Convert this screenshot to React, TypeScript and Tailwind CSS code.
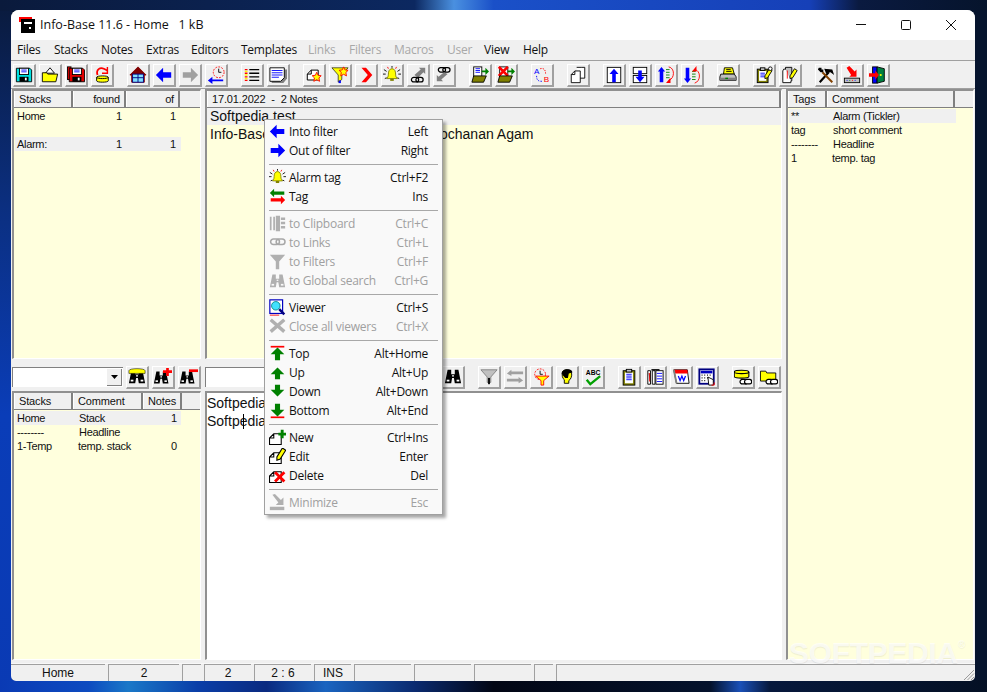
import React from "react";

const K = "#000";
const Y = "#ffff00";
const R = "#ff0000";
const B = "#0000ff";
const G = "#008000";
const S = "#808080";
const L = "#c0c0c0";
const W = "#ffffff";

const Chain = ({ x = 0, y = 0, c = K, f = "none" }: { x?: number; y?: number; c?: string; f?: string }) => (
  <g transform={`translate(${x} ${y})`} fill={f} stroke={c} strokeWidth="1.4">
    <rect x="0.7" y="0.7" width="8" height="5" rx="2.5" />
    <rect x="5.7" y="0.7" width="8" height="5" rx="2.5" />
  </g>
);
const Binoc = ({ c = K, e = W }: { c?: string; e?: string }) => (
  <g>
    <path d="M4 2h4v5h4V2h4l3 15h-7l-1-6h-2l-1 6H1z" fill={c} />
    <rect x="3" y="13" width="3" height="2" fill={e} />
    <rect x="14" y="13" width="3" height="2" fill={e} />
    <rect x="9" y="8" width="2" height="1.5" fill={e} />
  </g>
);
const Disk = ({ x = 0, y = 0, c = "#ffff00" }: { x?: number; y?: number; c?: string }) => (
  <g transform={`translate(${x} ${y})`}>
    <path d="M1 3.5C1 1.5 14 1.5 14 3.5v4C14 9.5 1 9.5 1 7.5z" fill={c} stroke={K} />
    <path d="M1 3.5C1 5.5 14 5.5 14 3.5" fill="none" stroke={K} />
  </g>
);
const Pencil = ({ x = 0, y = 0 }: { x?: number; y?: number }) => (
  <g transform={`translate(${x} ${y})`}>
    <path d="M6 0l3 2-5 8-3 1 0-3z" fill={Y} stroke={K} />
  </g>
);
const Floppy = ({ c, c2 = K }: { c: string; c2?: string }) => (
  <g>
    <path d="M1.5 2.5h15l2 2v13h-17z" fill={c} stroke={K} />
    <rect x="5" y="2.5" width="10" height="7" fill={W} stroke={K} />
    <path d="M7 4.5h6M7 6.5h6" stroke={B} />
    <rect x="5" y="12" width="10" height="5.5" fill={c2} />
    <rect x="11" y="13" width="2" height="3" fill={W} />
  </g>
);
const Page = ({ x = 0, y = 0, c = W }: { x?: number; y?: number; c?: string }) => (
  <path transform={`translate(${x} ${y})`} d="M4.5.5h7v10h-11V4.5z M4.5.5v4h-4" fill={c} stroke={K} />
);
const Bell = () => (
  <g>
    <path d="M10 3c-3 0-4 3-4 6 0 3-1 4-2 5h12c-1-1-2-2-2-5 0-3-1-6-4-6z" fill={Y} stroke="#808000" />
    <rect x="8" y="14" width="4" height="2.5" fill="#808000" />
    <path d="M1 4l3 2M19 4l-3 2M0 9h3M17 9h3M2 14l2-1M18 14l-2-1M10 0v2" stroke={K} />
    <path d="M5 1l1 2M15 1l-1 2" stroke={R} />
  </g>
);
const Clock = ({ x = 0, y = 0 }: { x?: number; y?: number }) => (
  <g transform={`translate(${x} ${y})`}>
    <circle cx="7" cy="7" r="6" fill="none" stroke={R} strokeDasharray="2 1.4" />
    <path d="M7 3v4h3" fill="none" stroke={K} />
  </g>
);
const ArrowLeft = ({ c }: { c: string }) => <path d="M1 10l8-8v5h9v6H9v5z" fill={c} />;
const ArrowRight = ({ c }: { c: string }) => <path d="M19 10l-8-8v5H2v6h9v5z" fill={c} />;
const ArrowUp = ({ c = G }: { c?: string }) => <path d="M10 4l8 8h-5v6H7v-6H2z" fill={c} />;
const ArrowDown = ({ c = G }: { c?: string }) => <path d="M10 16l8-8h-5V2H7v6H2z" fill={c} />;
const Funnel = ({ c }: { c: string }) => <path d="M1 2h18l-7 8v5l-4 3v-8z" fill={c} stroke={K} strokeWidth="0.7" />;
const XMark = ({ x = 0, y = 0, s = 1 }: { x?: number; y?: number; s?: number }) => (
  <path transform={`translate(${x} ${y}) scale(${s})`} d="M1 1l10 10M11 1L1 11" stroke={R} strokeWidth="3" />
);
const Star = ({ x = 0, y = 0 }: { x?: number; y?: number }) => (
  <path transform={`translate(${x} ${y})`} d="M5 0l1.5 3.3L10 3.8 7.5 6.2 8.2 10 5 8.2 1.8 10l.7-3.8L0 3.8l3.5-.5z" fill={Y} stroke={R} />
);

const icons: Record<string, React.ReactNode> = {
  save: <Floppy c="#00e0e0" />,
  open: (
    <g>
      <path d="M5 8l5-6 5 6z" fill={W} stroke={K} />
      <path d="M1.5 7.5h5l1 1.5h11l-2 8.5h-15z" fill={Y} stroke={K} />
    </g>
  ),
  saveas: (
    <g>
      <rect x="0.5" y="1" width="4" height="14" fill={R} stroke={K} />
      <g transform="translate(1 0)"><Floppy c="#e00000" /></g>
    </g>
  ),
  diskred: (
    <g>
      <Disk x="3" y="9" />
      <path d="M5 10C3 4 8 1 12 3l4 2" fill="none" stroke={R} strokeWidth="2" />
      <path d="M16 1v7h-6" fill="none" stroke={R} strokeWidth="1.6" />
    </g>
  ),
  home: (
    <g>
      <path d="M10 1L1 10h2v8h14v-8h2z" fill="#800000" stroke="#800000" />
      <rect x="4" y="9" width="12" height="9" fill="#80e0ff" stroke="#000080" />
      <path d="M10 9v9M4 13h12" stroke="#000080" />
    </g>
  ),
  left: <ArrowLeft c={B} />,
  right: <ArrowRight c={B} />,
  grayright: <ArrowRight c="#a0a0a0" />,
  clockleft: (
    <g>
      <Clock x="6" y="0" />
      <path d="M1 16l5-4v3h12v2H6v3z" fill={B} />
    </g>
  ),
  list: (
    <g>
      <path d="M2 4h3M2 8h3M2 12h3M2 16h3" stroke={R} strokeWidth="1.5" />
      <path d="M2 6h3M2 10h3M2 14h3" stroke={Y} strokeWidth="1.5" />
      <path d="M7 4h11M7 8h11M7 12h11M7 16h11" stroke={K} strokeWidth="1.5" />
    </g>
  ),
  note: (
    <g>
      <path d="M3 4h17v10l-4 5H3z" fill={S} />
      <path d="M1 2h16v11l-4 4H1z" fill={W} stroke={K} />
      <path d="M3 5h12M3 7.5h12M3 10h12M3 12.5h8" stroke={B} />
    </g>
  ),
  pagestar: (
    <g>
      <g transform="translate(2 4) scale(1.1)"><Page /></g>
      <Star x="8" y="7" />
    </g>
  ),
  funnelstar: (
    <g>
      <Funnel c={Y} />
      <rect x="8.5" y="16" width="2.5" height="3" fill={B} />
      <Star x="9" y="1" />
    </g>
  ),
  chev: <path d="M5 2h5l7 8-7 8H5l7-8z" fill={R} />,
  bell: <Bell />,
  graychain: (
    <g>
      <path d="M6 10l7-6-2-2h7v7l-2-2-6 6z" fill={S} />
      <Chain x="2" y="12" />
    </g>
  ),
  chaingray: (
    <g>
      <Chain x="3" y="1" />
      <path d="M14 9l-7 6 2 2H2v-7l2 2 6-5z" fill={S} />
    </g>
  ),
  docin: (
    <g>
      <rect x="3" y="1" width="9" height="11" fill={W} stroke={K} />
      <path d="M5 3h5M5 5h5M5 7h5" stroke={B} />
      <path d="M12 5h4V2l4 4-4 4V7h-4z" fill={G} />
      <path d="M1 18l2-7h14l-3 7z" fill="#808000" stroke={K} />
    </g>
  ),
  docx: (
    <g>
      <rect x="3" y="1" width="9" height="11" fill={W} stroke={K} />
      <XMark x="1" y="0" />
      <path d="M12 5h4V2l4 4-4 4V7h-4z" fill={G} />
      <path d="M1 18l2-7h14l-3 7z" fill="#808000" stroke={K} />
    </g>
  ),
  ab: (
    <g>
      <text x="1" y="9" fontSize="9" fontFamily="Liberation Sans" fill={B}>A</text>
      <text x="12" y="18" fontSize="9" fontFamily="Liberation Sans" fill={R}>B</text>
      <path d="M4 11c0 5 2 6 6 6" fill="none" stroke={B} strokeDasharray="1.4 1.4" />
      <path d="M8 3c4-1 6 1 6 6" fill="none" stroke={R} strokeDasharray="1.4 1.4" />
    </g>
  ),
  pages: (
    <g>
      <path d="M8.5 1.5h5l4 0v12h-6" fill={W} stroke={K} />
      <path d="M6.5 5.5h6v13h-10V9.5z M6.5 5.5v4h-4" fill={W} stroke={K} />
    </g>
  ),
  boxup: (
    <g>
      <rect x="2.5" y="1.5" width="15" height="17" fill={W} stroke={K} />
      <path d="M10 3l5 6h-3v9H8V9H5z" fill={B} />
    </g>
  ),
  boxdown: (
    <g>
      <rect x="2.5" y="1.5" width="15" height="7" fill={W} stroke={K} />
      <rect x="2.5" y="10.5" width="15" height="8" fill={W} stroke={K} />
      <path d="M10 18l5-6h-3V5H8v7H5z" fill={B} />
    </g>
  ),
  listup: (
    <g>
      <path d="M5 1l4 5H7v12H3V6H1z" fill={B} />
      <path d="M10 4h4M10 7h4M10 10h4M10 13h4" stroke={G} />
      <path d="M13 1c7 1 7 13 0 15" fill="none" stroke={R} />
      <path d="M15 13v6h-5z" fill={R} />
    </g>
  ),
  listdown: (
    <g>
      <path d="M5 19l4-5H7V2H3v12H1z" fill={B} />
      <path d="M10 6h4M10 9h4M10 12h4M10 15h4" stroke={G} />
      <path d="M13 4c7 1 7 13 0 15" fill="none" stroke={R} />
      <path d="M15 0v6h-5z" fill={R} />
    </g>
  ),
  printer: (
    <g>
      <path d="M6 2h9l2 7H5z" fill={Y} stroke={K} />
      <path d="M8 4h5M8 6h6" stroke={K} />
      <path d="M2 9h15l2 3v4H1v-4z" fill={L} stroke={K} />
      <rect x="1" y="13" width="18" height="3" fill={S} />
      <rect x="7" y="13" width="3" height="1.5" fill={G} />
    </g>
  ),
  clippen: (
    <g>
      <rect x="2.5" y="3.5" width="12" height="15" fill="#808000" stroke={K} />
      <rect x="4.5" y="5.5" width="8" height="11" fill={W} />
      <rect x="6" y="2" width="5" height="3" fill={L} stroke={K} />
      <path d="M6 8h5M6 10h5M6 12h5" stroke={B} />
      <Pencil x="10" y="3" />
      <circle cx="17" cy="3" r="2" fill={W} stroke={K} />
    </g>
  ),
  docspen: (
    <g>
      <path d="M5 1.5h7v15H5z" fill={L} stroke={K} />
      <path d="M5 3.5h-2l-1 2v13h9v-2" fill={W} stroke={K} />
      <path d="M7 5v9" stroke={R} />
      <Pencil x="9" y="3" />
    </g>
  ),
  tools: (
    <g>
      <path d="M3 18L13 7" stroke="#000" strokeWidth="2.4" />
      <path d="M8 3l9 1 2 6-4-3-5 1z" fill={K} />
      <path d="M17 18L6 7" stroke="#804000" strokeWidth="2.2" />
      <path d="M2 2l3 0 0 2 2 0 0 3-3 0-3-3z" fill={K} />
    </g>
  ),
  trayin: (
    <g>
      <path d="M4 2l3-2 6 6 2-2v8H7l2-2z" fill={R} />
      <rect x="1.5" y="13.5" width="17" height="5" fill={L} stroke={K} />
      <path d="M4 16h1" stroke={B} /><path d="M7 16h1" stroke={G} /><path d="M10 16h1" stroke={R} /><path d="M13 16h1" stroke={B} />
    </g>
  ),
  door: (
    <g>
      <rect x="4" y="1" width="5" height="18" fill={B} stroke={K} />
      <path d="M9 1l8 2v14l-8 2z" fill="#008040" stroke={K} />
      <rect x="12" y="9" width="2" height="2" fill={Y} />
      <path d="M0 8h7V5l4 5-4 5v-3H0z" fill={R} />
    </g>
  ),
  binoc: <Binoc />,
  binocy: (
    <g>
      <Binoc />
      <path d="M1 3C1 0 19 0 19 3v3H1z" fill={Y} stroke={K} strokeWidth="0.6" />
    </g>
  ),
  binocplus: (
    <g>
      <g transform="translate(-1 2) scale(.9)"><Binoc /></g>
      <path d="M10 4h10M15 0v9" stroke={R} strokeWidth="3" />
    </g>
  ),
  binocminus: (
    <g>
      <g transform="translate(-1 2) scale(.9)"><Binoc /></g>
      <path d="M10 3h10" stroke={R} strokeWidth="3" />
    </g>
  ),
  funnel: (
    <g>
      <path d="M1 2h18l-7 8v6H8v-6z" fill={L} stroke={S} />
      <rect x="9" y="11" width="2" height="7" fill={K} />
    </g>
  ),
  swapgray: (
    <g>
      <path d="M1 6l5-4v2h13v3H6v2z" fill="#a0a0a0" />
      <path d="M19 14l-5-4v2H1v3h13v2z" fill="#a0a0a0" />
    </g>
  ),
  clockfunnel: (
    <g>
      <Clock x="2" y="0" />
      <path d="M4 9h15l-6 5v5h-3v-5z" fill={Y} stroke={R} />
    </g>
  ),
  head: (
    <g>
      <path d="M5 4c2-3 9-3 10 1 1 4-1 8-3 9v3H7v-4C5 12 4 8 5 4z" fill={Y} stroke={K} />
      <path d="M4 6c1-6 12-6 12-1l-4 1-1 5H8L6 9z" fill={K} />
    </g>
  ),
  abc: (
    <g>
      <text x="2" y="8" fontSize="7.5" fontFamily="Liberation Sans" fontWeight="700" fill={K}>ABC</text>
      <path d="M3 13l4 5L18 9" fill="none" stroke="#00a000" strokeWidth="2.6" />
    </g>
  ),
  clipboard: (
    <g>
      <rect x="3.5" y="3" width="13" height="16" fill="#808000" stroke={K} />
      <rect x="5.5" y="5" width="9" height="12" fill={W} />
      <rect x="7" y="1.5" width="6" height="3" fill={L} stroke={K} />
      <path d="M7 7h6M7 9h6M7 11h6M7 13h6" stroke={B} />
    </g>
  ),
  files: (
    <g>
      <path d="M2 3h3v15H2zM7 3h3v15H7z" fill={W} stroke={K} />
      <path d="M3 6h1v9" stroke={R} />
      <rect x="11" y="3" width="8" height="15" fill={W} stroke={K} />
      <path d="M12 6h6M12 9h6M12 12h6M12 15h6" stroke={B} />
      <path d="M6 2h9" stroke={K} strokeWidth="1.5" />
    </g>
  ),
  calendar: (
    <g>
      <path d="M2 2h15l2 15H5z" fill={W} stroke={K} />
      <path d="M2 2h15l.6 4H2.6z" fill={R} />
      <path d="M7 9l2 5 2-5 2 5 2-5" fill="none" stroke={B} strokeWidth="1.4" />
      <path d="M2 2l3 15" stroke={S} strokeWidth="2" />
    </g>
  ),
  calc: (
    <g>
      <rect x="1.5" y="1.5" width="16" height="16" fill={W} stroke="#000080" strokeWidth="2" />
      <rect x="3" y="3" width="13" height="3" fill="#0000c0" />
      <path d="M4 8h1M7 8h1M10 8h1M13 8h1M4 11h1M7 11h1M10 11h1M4 14h1M7 14h1" stroke={K} strokeWidth="1.4" />
      <path d="M11 10l6 3v6h-5z" fill={W} stroke={K} />
      <path d="M18 16v3h-3" stroke={R} fill="none" />
    </g>
  ),
  diskchain: (
    <g>
      <g transform="translate(-1 0) scale(1.25)"><Disk /></g>
      <Chain x="6" y="12" f="#ffffff" />
    </g>
  ),
  folderchain: (
    <g>
      <path d="M0.5 3.5h6l1 2h10v9h-17z" fill={Y} stroke={K} />
      <Chain x="6" y="12" f="#ffffff" />
    </g>
  ),
  tag: (
    <g>
      <path d="M1 6l5-5v3h12v4H6v3z" fill={G} />
      <path d="M19 14l-5-5v3H2v4h12v3z" fill={R} />
    </g>
  ),
  gclip: (
    <g fill="#b0b0b0">
      <path d="M1 2h2v16H1zM5 2h2v16H5z" />
      <path d="M8 1h5v18H8zM14 3h5v3h-5zM14 8h5v3h-5zM14 13h5v3h-5z" />
    </g>
  ),
  gchain: <g transform="translate(1 5) scale(1.3)"><Chain c="#a8a8a8" /></g>,
  gfunnel: <path d="M1 2h18l-7 8v9H8v-9z" fill="#b0b0b0" />,
  gbinoc: <g transform="translate(0 1)"><Binoc c="#b0b0b0" e="#f9f9f9" /></g>,
  viewer: (
    <g>
      <rect x="1" y="1" width="15" height="16" fill={W} stroke="#0000c0" strokeWidth="1.4" />
      <circle cx="8" cy="8" r="5" fill="#40e0ff" stroke="#008080" />
      <path d="M12 12l6 6" stroke="#000080" strokeWidth="3" />
      <path d="M1 19h11" stroke={R} />
    </g>
  ),
  gx: <path d="M2 2l16 14M18 2L2 16" stroke="#b0b0b0" strokeWidth="4" />,
  top: (
    <g>
      <path d="M2 2h16" stroke={R} strokeWidth="2" />
      <path d="M10 3l8 8h-5v7H7v-7H2z" fill={G} />
    </g>
  ),
  up: <ArrowUp />,
  down: <ArrowDown />,
  bottom: (
    <g>
      <path d="M2 18h16" stroke={R} strokeWidth="2" />
      <path d="M10 17L2 9h5V2h6v7h5z" fill={G} />
    </g>
  ),
  newp: (
    <g>
      <g transform="translate(0 5) scale(1.25)"><Page /></g>
      <path d="M11 6h9M15.5 1v10" stroke={G} strokeWidth="3.4" />
    </g>
  ),
  editp: (
    <g>
      <g transform="translate(0 5) scale(1.25)"><Page /></g>
      <g transform="translate(8 0) scale(1.3)"><Pencil /></g>
    </g>
  ),
  delp: (
    <g>
      <g transform="translate(0 5) scale(1.25)"><Page /></g>
      <XMark x="6" y="5" s={1.1} />
    </g>
  ),
  gmin: (
    <g>
      <path d="M4 1l3-1 7 7 3-3v9H8l3-3z" fill="#b0b0b0" />
      <rect x="1" y="15" width="17" height="4" fill="#b0b0b0" />
    </g>
  ),
};

const Icon = ({ n, s = 20 }: { n: string; s?: number }) => (
  <svg width={s} height={s} viewBox="0 0 20 20" className="block shrink-0">
    {icons[n]}
  </svg>
);

const TBtn = ({ n }: { n: string }) => (
  <div className="flex h-[23px] w-[23px] items-center justify-center border-t border-l border-r-2 border-b-2 border-t-white border-l-white border-r-[#a0a0a0] border-b-[#a0a0a0] bg-[#f0f0f0]">
    <Icon n={n} s={18} />
  </div>
);

const Group = ({ items }: { items: string[] }) => (
  <div className="flex gap-[3px]">
    {items.map((n, i) => (
      <TBtn key={i} n={n} />
    ))}
  </div>
);

const menuBar: [string, string, boolean][] = [
  ["Files", "w-[37px]", false],
  ["Stacks", "w-[47px]", false],
  ["Notes", "w-[45px]", false],
  ["Extras", "w-[45px]", false],
  ["Editors", "w-[50px]", false],
  ["Templates", "w-[67px]", false],
  ["Links", "w-[41px]", true],
  ["Filters", "w-[45px]", true],
  ["Macros", "w-[53px]", true],
  ["User", "w-[37px]", true],
  ["View", "w-[39px]", false],
  ["Help", "w-[40px]", false],
];

const HeaderCell = ({ w, children, right }: { w: string; children?: React.ReactNode; right?: boolean }) => (
  <div className={`${w} flex h-full shrink-0 items-center border-r-2 border-r-[#808080] border-l border-l-white px-[4px] ${right ? "justify-end" : ""}`}>
    {children}
  </div>
);

const Header = ({ children }: { children: React.ReactNode }) => (
  <div className="flex h-[17px] shrink-0 border-b border-b-[#808080] bg-[#f0f0f0] text-[11px] tracking-[-0.15px] text-[#111]">{children}</div>
);

const Panel = ({ className, children }: { className: string; children: React.ReactNode }) => (
  <div className={`${className} flex flex-col overflow-hidden border-t-2 border-l-2 border-t-[#909090] border-l-[#909090] border-r border-b border-r-white border-b-white`}>
    {children}
  </div>
);

const menu: (null | [string, string, string, boolean?])[] = [
  ["left", "Into filter", "Left"],
  ["right", "Out of filter", "Right"],
  null,
  ["bell", "Alarm tag", "Ctrl+F2"],
  ["tag", "Tag", "Ins"],
  null,
  ["gclip", "to Clipboard", "Ctrl+C", true],
  ["gchain", "to Links", "Ctrl+L", true],
  ["gfunnel", "to Filters", "Ctrl+F", true],
  ["gbinoc", "to Global search", "Ctrl+G", true],
  null,
  ["viewer", "Viewer", "Ctrl+S"],
  ["gx", "Close all viewers", "Ctrl+X", true],
  null,
  ["top", "Top", "Alt+Home"],
  ["up", "Up", "Alt+Up"],
  ["down", "Down", "Alt+Down"],
  ["bottom", "Bottom", "Alt+End"],
  null,
  ["newp", "New", "Ctrl+Ins"],
  ["editp", "Edit", "Enter"],
  ["delp", "Delete", "Del"],
  null,
  ["gmin", "Minimize", "Esc", true],
];

const uiFont = "font-['Open_Sans','Noto_Sans',sans-serif]";

const PopupMenu = () => (
  <div className={`absolute top-[119px] left-[264px] z-10 w-[179px] border border-[#a0a0a0] bg-[#f9f9f9] px-[2px] py-[2px] text-[12px] tracking-[-0.25px] shadow-[3px_3px_3px_rgba(0,0,0,0.35)] ${uiFont}`}>
    {menu.map((m, i) =>
      m === null ? (
        <div key={i} className="flex h-[8px] items-center px-[2px]">
          <div className="h-px w-full bg-[#a8a8a8]" />
        </div>
      ) : (
        <div key={i} className={`flex h-[19px] items-center pr-[12px] pl-[2px] ${m[3] ? "text-[#a0a0a0]" : "text-[#111]"}`}>
          <Icon n={m[0]} s={17} />
          <span className="ml-[3px] grow">{m[1]}</span>
          <span>{m[2]}</span>
        </div>
      ),
    )}
  </div>
);

const Wallpaper = () => (
  <svg className="absolute inset-0" width="987" height="692" viewBox="0 0 987 692">
    <defs>
      <linearGradient id="lft" x1="0" y1="0" x2="0" y2="1">
        <stop offset="0" stopColor="#0a1a3c" />
        <stop offset="0.3" stopColor="#0b2f80" />
        <stop offset="0.6" stopColor="#0a3db8" />
        <stop offset="1" stopColor="#0a3ab4" />
      </linearGradient>
      <linearGradient id="bot" x1="0" y1="0" x2="1" y2="0">
        <stop offset="0" stopColor="#0a3ab4" />
        <stop offset="0.09" stopColor="#0d4bc0" />
        <stop offset="0.13" stopColor="#1a78c8" />
        <stop offset="0.2" stopColor="#0a3ea8" />
        <stop offset="0.27" stopColor="#0a2a80" />
        <stop offset="0.33" stopColor="#1a64c0" />
        <stop offset="0.42" stopColor="#0a2a70" />
        <stop offset="0.5" stopColor="#020614" />
        <stop offset="0.72" stopColor="#04122c" />
        <stop offset="0.75" stopColor="#1a50b8" />
        <stop offset="0.78" stopColor="#06183c" />
        <stop offset="1" stopColor="#041024" />
      </linearGradient>
      <linearGradient id="tp" x1="0" y1="0" x2="1" y2="0">
        <stop offset="0" stopColor="#0a1a3c" />
        <stop offset="0.42" stopColor="#0c2860" />
        <stop offset="0.46" stopColor="#4a90e0" />
        <stop offset="0.5" stopColor="#1a50c8" />
        <stop offset="0.82" stopColor="#1640b8" />
        <stop offset="0.87" stopColor="#0a1a40" />
        <stop offset="1" stopColor="#06142c" />
      </linearGradient>
    </defs>
    <rect width="987" height="692" fill="#06142e" />
    <rect width="12" height="692" fill="url(#lft)" />
    <rect width="987" height="11" fill="url(#tp)" />
    <rect y="680" width="987" height="12" fill="url(#bot)" />
  </svg>
);

export default function App() {
  return (
    <div className="relative h-[692px] w-[987px] overflow-hidden font-['Liberation_Sans',Arial,sans-serif]">
      <Wallpaper />
      <div className="relative pt-[10px] pl-[11px]">
        <div className="flex h-[671px] w-[964px] flex-col overflow-hidden rounded-t-[8px] rounded-b-[5px] bg-[#f0f0f0]">
          {/* Title bar */}
          <div className="flex h-[30px] shrink-0 items-center bg-white pl-[8px]">
            <svg width="16" height="16" viewBox="0 0 16 16" className="block">
              <rect x="0" y="0" width="13" height="5" fill="#ff0000" />
              <rect x="2" y="2" width="14" height="14" fill="#000" />
              <rect x="5" y="5" width="8" height="2" fill="#fff" />
              <rect x="10" y="10" width="2" height="2" fill="#fff" />
            </svg>
            <span className={`ml-[5px] whitespace-pre text-[12.5px] text-[#111] ${uiFont}`}>Info-Base 11.6 - Home   1 kB</span>
            <div className="ml-auto flex pr-[1px]">
              <div className="flex h-[30px] w-[45px] items-center justify-center">
                <svg width="10" height="10" viewBox="0 0 10 10"><path d="M0 4.5h10" stroke="#111" /></svg>
              </div>
              <div className="flex h-[30px] w-[45px] items-center justify-center">
                <svg width="10" height="10" viewBox="0 0 10 10"><rect x="0.5" y="0.5" width="9" height="9" rx="1" fill="none" stroke="#111" /></svg>
              </div>
              <div className="flex h-[30px] w-[46px] items-center justify-center">
                <svg width="10" height="10" viewBox="0 0 10 10"><path d="M0 0l10 10M10 0L0 10" stroke="#111" /></svg>
              </div>
            </div>
          </div>
          {/* Menu */}
          <div className={`flex h-[20px] shrink-0 items-center pl-[6px] text-[12px] tracking-[-0.25px] ${uiFont}`}>
            {menuBar.map(([t, w, dis]) => (
              <span key={t} className={`${w} ${dis ? "text-[#a8a8a8]" : "text-[#111]"}`}>{t}</span>
            ))}
          </div>
          {/* Toolbar */}
          <div className="flex h-[28px] shrink-0 items-center gap-[13px] border-t border-t-[#a0a0a0] pt-[1px] pl-[2px]">
            <Group items={["save", "open", "saveas", "diskred"]} />
            <Group items={["home", "left", "grayright", "clockleft"]} />
            <Group items={["list", "note"]} />
            <Group items={["pagestar", "funnelstar", "chev", "bell", "graychain", "chaingray"]} />
            <Group items={["docin", "docx"]} />
            <Group items={["ab"]} />
            <Group items={["pages"]} />
            <Group items={["boxup", "boxdown", "listup", "listdown"]} />
            <Group items={["printer"]} />
            <Group items={["clippen", "docspen"]} />
            <Group items={["tools", "trayin", "door"]} />
          </div>
          {/* Body */}
          <div className="flex min-h-0 grow border-t border-t-[#a0a0a0] pl-[1px]">
            <div className="flex w-[770px] shrink-0 flex-col">
              {/* Upper panels */}
              <div className="flex h-[270px] shrink-0 gap-[4px]">
                <Panel className="w-[189px] bg-[#ffffdd]">
                  <Header>
                    <HeaderCell w="w-[59px]">Stacks</HeaderCell>
                    <HeaderCell w="w-[53px]" right>found</HeaderCell>
                    <HeaderCell w="w-[54px]" right>of</HeaderCell>
                  </Header>
                  <div className="pt-[1px] text-[11px] tracking-[-0.3px] text-[#111]">
                    <div className="flex h-[14px] items-center pl-[3px]"><span className="w-[99px]">Home</span><span className="w-[6px]">1</span><span className="ml-[48px] w-[6px]">1</span></div>
                    <div className="h-[14px]" />
                    <div className="ml-[1px] flex h-[14px] w-[166px] items-center bg-[#f0f0f0] pl-[2px]"><span className="w-[99px]">Alarm:</span><span className="w-[6px]">1</span><span className="ml-[48px] w-[6px]">1</span></div>
                  </div>
                </Panel>
                <Panel className="w-[577px] bg-[#ffffdd]">
                  <Header>
                    <HeaderCell w="w-[574px]"><span className="whitespace-pre">17.01.2022  -  2 Notes</span></HeaderCell>
                  </Header>
                  <div className="text-[14px] text-[#111]">
                    <div className="flex h-[17px] items-center bg-[#f0f0f0] pl-[3px]">Softpedia test</div>
                    <div className="flex h-[18px] items-center whitespace-pre pl-[3px]">Info-Base<span className="inline-block w-[9px]" /> is a program written by Mochanan Agam</div>
                  </div>
                </Panel>
              </div>
              {/* Lower toolbar */}
              <div className="flex h-[32px] shrink-0 items-center gap-[4px] pt-[4px]">
                <div className="flex w-[189px] shrink-0 items-center">
                  <div className="flex h-[20px] w-[111px] shrink-0 items-center justify-end border-t border-l border-t-[#808080] border-l-[#808080] bg-white pr-[1px]">
                    <div className="flex h-[17px] w-[15px] items-center justify-center border-r border-b border-r-[#808080] border-b-[#808080] bg-[#f0f0f0]">
                      <svg width="7" height="4" viewBox="0 0 7 4"><path d="M0 0h7L3.5 4z" fill="#000" /></svg>
                    </div>
                  </div>
                  <div className="ml-[3px]"><Group items={["binocy", "binocplus", "binocminus"]} /></div>
                </div>
                <div className="flex items-center gap-[13px]">
                  <div className="h-[20px] w-[224px] border-t border-l border-t-[#808080] border-l-[#808080] bg-white" />
                  <Group items={["binoc"]} />
                  <Group items={["funnel", "swapgray", "clockfunnel", "head", "abc"]} />
                  <Group items={["clipboard", "files", "calendar", "calc"]} />
                  <Group items={["diskchain", "folderchain"]} />
                </div>
              </div>
              {/* Lower panels */}
              <div className="flex min-h-0 grow gap-[4px] pb-[3px]">
                <Panel className="w-[189px] bg-[#ffffdd]">
                  <Header>
                    <HeaderCell w="w-[59px]">Stacks</HeaderCell>
                    <HeaderCell w="w-[70px]">Comment</HeaderCell>
                    <HeaderCell w="w-[39px]">Notes</HeaderCell>
                  </Header>
                  <div className="pt-[1px] text-[11px] tracking-[-0.3px] text-[#111]">
                    <div className="ml-[1px] flex h-[14px] w-[166px] items-center bg-[#f0f0f0] pl-[2px]"><span className="w-[62px]">Home</span><span className="w-[92px]">Stack</span><span>1</span></div>
                    <div className="flex h-[14px] items-center pl-[3px]"><span className="w-[62px]">--------</span><span>Headline</span></div>
                    <div className="flex h-[14px] items-center pl-[3px]"><span className="w-[61px]">1-Temp</span><span className="w-[93px]">temp. stack</span><span>0</span></div>
                  </div>
                </Panel>
                <Panel className="w-[577px] bg-white">
                  <div className="pt-[1px] text-[14px] leading-[18px] text-[#111]">
                    <div>Softpedia test</div>
                    <div className="relative">
                      Softpedia test
                      <span className="absolute top-[2px] left-[36px] h-[15px] w-px bg-black" />
                    </div>
                  </div>
                </Panel>
              </div>
            </div>
            {/* Right panel */}
            <div className="ml-[4px] flex min-h-0 w-[188px] shrink-0 flex-col pb-[3px]">
              <Panel className="grow bg-[#ffffdd]">
                <Header>
                  <HeaderCell w="w-[39px]">Tags</HeaderCell>
                  <HeaderCell w="w-[128px]">Comment</HeaderCell>
                </Header>
                <div className="pt-[1px] text-[11px] tracking-[-0.3px] text-[#111]">
                  <div className="ml-[1px] flex h-[14px] w-[167px] items-center bg-[#f0f0f0] pl-[2px]"><span className="w-[42px]">**</span>Alarm (Tickler)</div>
                  <div className="flex h-[14px] items-center pl-[3px]"><span className="w-[42px]">tag</span>short comment</div>
                  <div className="flex h-[14px] items-center pl-[3px]"><span className="w-[42px]">--------</span>Headline</div>
                  <div className="flex h-[14px] items-center pl-[3px]"><span className="w-[41px]">1</span>temp. tag</div>
                </div>
              </Panel>
            </div>
          </div>
          {/* Status bar */}
          <div className="relative flex h-[18px] shrink-0 gap-[3px] border-t border-t-[#f8f8f8] text-[12px] text-[#111]">
            {[
              ["w-[94px]", "Home"],
              ["w-[71px]", "2"],
              ["w-[19px]", ""],
              ["w-[47px]", "2"],
              ["w-[57px]", "2 : 6"],
              ["w-[37px]", "INS"],
              ["w-[57px]", ""],
              ["w-[57px]", ""],
              ["w-[57px]", ""],
              ["w-[19px]", ""],
              ["grow", ""],
            ].map(([w, t], i) => (
              <div key={i} className={`${w} flex items-center justify-center border-t border-l border-t-[#a0a0a0] border-l-[#a0a0a0] ${i === 0 ? "border-l-0" : ""}`}>{t}</div>
            ))}
            <svg width="12" height="12" viewBox="0 0 12 12" className="absolute right-0 bottom-0">
              <path d="M11 1L1 11M11 4.5L4.5 11M11 8l-3 3" stroke="#9a9a9a" />
            </svg>
          </div>
        </div>
      </div>
      <PopupMenu />
      <div className="absolute top-[638px] left-[789px] z-20 flex items-start font-['Liberation_Sans',sans-serif] text-[30px] leading-[30px] font-bold tracking-[-0.3px] text-white/70 [text-shadow:0_1px_1px_rgba(0,0,0,0.07)]">
        SOFTPEDIA<span className="mt-[1px] text-[10px] leading-[12px] font-normal">®</span>
      </div>
    </div>
  );
}
